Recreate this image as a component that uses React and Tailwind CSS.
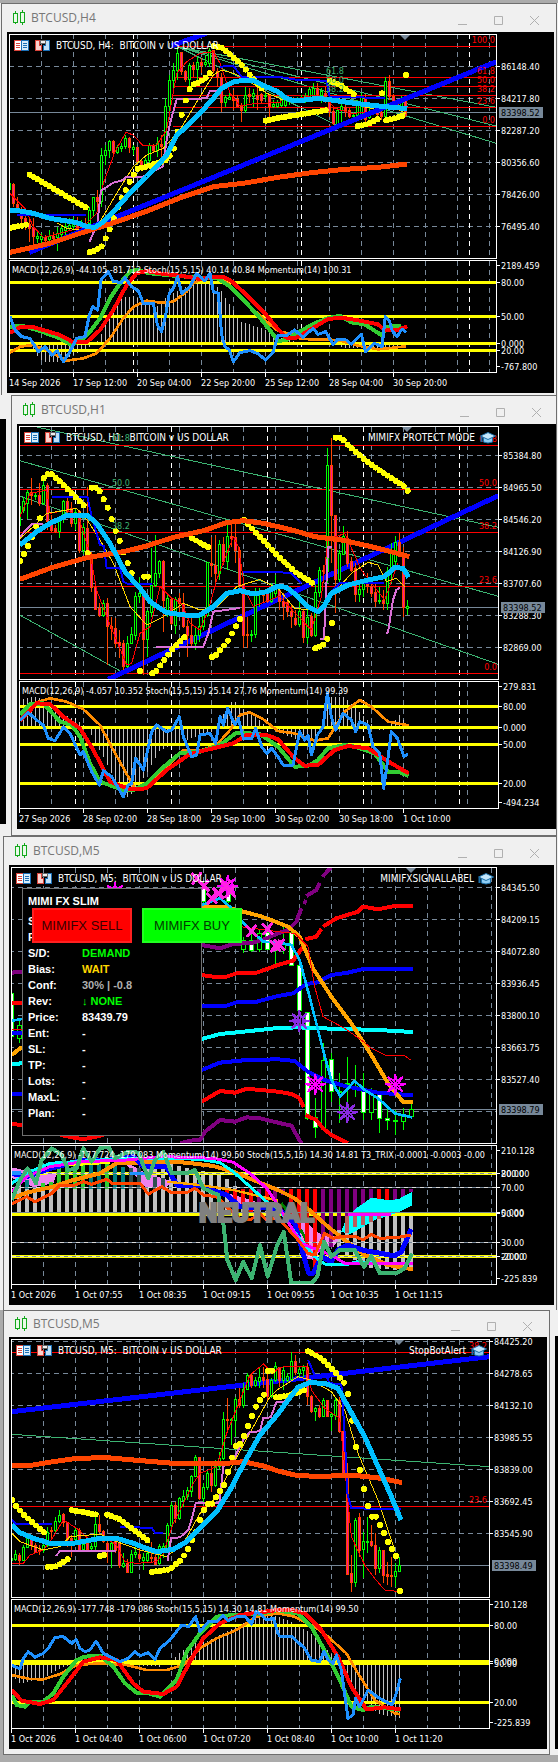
import React from "react";

const HALF = 834;
const FONT = '"DejaVu Sans Condensed", "DejaVu Sans", sans-serif';

const parse = (s) =>
  s.trim() ? s.trim().split(/\s+/).map((p) => p.split(",").map(Number)) : [];
const join = (left, right = "") => [
  ...parse(left),
  ...parse(right).map(([x, y]) => [x + HALF, y]),
];

function valueAt(points, x) {
  if (x <= points[0][0]) return points[0][1];
  for (let i = 1; i < points.length; i++) {
    const [x0, y0] = points[i - 1];
    const [x1, y1] = points[i];
    if (x <= x1) return x1 === x0 ? y1 : y0 + ((y1 - y0) * (x - x0)) / (x1 - x0);
  }
  return points[points.length - 1][1];
}

/* Plot space uses three units per pixel. */
function Plot({ y, clip, children }) {
  return (
    <g clipPath={`url(#${clip})`}>
      <g transform={`scale(${1 / 3}) translate(0 ${y})`} shapeRendering="crispEdges">
        {children}
      </g>
    </g>
  );
}

function Line({ l = "", r = "", c, w = 3 }) {
  return (
    <polyline
      points={join(l, r).map((p) => p.join(",")).join(" ")}
      fill="none"
      stroke={c}
      strokeWidth={w}
      strokeLinejoin="round"
    />
  );
}

function Dots({ l = "", r = "" }) {
  const pts = join(l, r);
  const end = pts[pts.length - 1][0];
  const out = [];
  for (let x = pts[0][0]; x <= end + 4; x += 12) out.push([x, valueAt(pts, x)]);
  return (
    <g fill="#ffff00">
      {out.map(([x, y]) => (
        <circle key={x} cx={x} cy={y} r="9" />
      ))}
    </g>
  );
}

function Bars({ l, r, zero, from, to, step = 12, w = 3 }) {
  const pts = join(l, r);
  const out = [];
  for (let x = from; x <= to; x += step) out.push([x, valueAt(pts, x)]);
  return (
    <g stroke="#c0c0c0" strokeWidth={w}>
      {out.map(([x, y]) => (
        <line key={x} x1={x} x2={x} y1={zero} y2={y} />
      ))}
    </g>
  );
}

/* Each candle: high,top,bottom,low followed by u or d. */
function Candles({ data, start }) {
  return (
    <g strokeWidth="3">
      {data.trim().split(/\s+/).map((s, i) => {
        const up = s.endsWith("u");
        const [h, t, b, lo] = s.slice(0, -1).split(",").map(Number);
        const x = start + i * 12;
        const color = up ? "#00ff00" : "#ff4500";
        return (
          <g key={i} stroke={color}>
            <line x1={x} x2={x} y1={h} y2={lo} />
            <rect x={x - 3} y={t} width="6" height={Math.max(3, b - t)} fill={up ? "#000" : "#ff1493"} />
          </g>
        );
      })}
    </g>
  );
}

function Grid({ right, rows = [], cols, top, bottom, marks = [] }) {
  return (
    <g stroke="#778899" strokeWidth="3" strokeDasharray="15 12">
      {rows.map((y) => (
        <line key={"h" + y} x1="28" x2={right} y1={y} y2={y} />
      ))}
      {Array.from({ length: 15 }, (_, i) => cols + i * 96).map((x) => (
        <line key={"v" + x} x1={x} x2={x} y1={top} y2={bottom} />
      ))}
      {marks.map((x) => (
        <line key={"m" + x} x1={x} x2={x} y1={top} y2={bottom} stroke="#fff" />
      ))}
    </g>
  );
}

function Levels({ ys, x1, x2, w = 9, c = "#ffff00" }) {
  return ys.map((y) => <line key={y} x1={x1} x2={x2} y1={y} y2={y} stroke={c} strokeWidth={w} />);
}

function Label({ x, y, children, fill = "#fff", anchor = "start", size = 9 }) {
  return (
    <text x={x} y={y} fill={fill} textAnchor={anchor} fontSize={size} style={{ fontFamily: FONT, whiteSpace: "pre" }}>
      {children}
    </text>
  );
}

function Frame({ x, w, panes }) {
  return (
    <g fill="none" stroke="#fff" shapeRendering="crispEdges">
      {panes.map(([y, h]) => (
        <rect key={y} x={x + 0.5} y={y + 0.5} width={w} height={h} />
      ))}
    </g>
  );
}

function PriceAxis({ x, labels }) {
  return (
    <g>
      {labels.map(([y, t]) => (
        <g key={y + t}>
          <line x1={x} x2={x + 4} y1={y + 0.5} y2={y + 0.5} stroke="#fff" shapeRendering="crispEdges" />
          <Label x={x + 5} y={y + 4}>{t}</Label>
        </g>
      ))}
    </g>
  );
}

function PriceTag({ x, y, children }) {
  return (
    <g>
      <rect x={x + 3} y={y - 5} width="44" height="11" fill="#778899" />
      <Label x={x + 5} y={y + 4} fill="#000">{children}</Label>
    </g>
  );
}

function TimeAxis({ x, y, labels }) {
  return labels.map((t, i) => (
    <g key={t}>
      <line x1={x + i * 64 + 0.5} x2={x + i * 64 + 0.5} y1={y} y2={y + 4} stroke="#fff" shapeRendering="crispEdges" />
      <Label x={x + i * 64} y={y + 13}>{t}</Label>
    </g>
  ));
}

function HeaderIcons({ x, y }) {
  return (
    <g transform={`translate(${x} ${y})`} shapeRendering="crispEdges">
      <rect x="0" y="0" width="8" height="11" fill="#d9453b" />
      <rect x="7" y="0" width="8" height="11" fill="#1b6fb5" />
      <rect x="1" y="1" width="6" height="9" fill="#fff" />
      <rect x="8" y="1" width="6" height="9" fill="#d8ecfa" />
      <path d="M2 3.5h4M2 5.5h4M2 7.5h4" stroke="#d9453b" />
      <path d="M9 3.5h4M9 5.5h4M9 7.5h4" stroke="#1b6fb5" />
      <path d="M21.500 .5h4v5h2v5h-6z" fill="#fbd3cf" stroke="#d9453b" />
      <path d="M31.500 .5h4v10h-6v-5h2z" fill="#bfe0f8" stroke="#1b6fb5" />
      <rect x="26" y="0" width="5" height="3" fill="#f0f0f0" stroke="#666" />
    </g>
  );
}

function Cap({ x, y }) {
  return (
    <g transform={`translate(${x} ${y})`}>
      <path d="M3.5 5v5q4.500 2 9 0V5z" fill="#8fcdf4" stroke="#1b6fa8" />
      <path d="M.5 4 8 .5 15.500 4 8 7.500z" fill="#c4e6fb" stroke="#1b6fa8" />
      <path d="M1.500 4.500V10" stroke="#1b6fa8" strokeWidth="2" />
    </g>
  );
}

function Marker({ x, y }) {
  return <path d={`M${x - 5} ${y}h10l-5 5z`} fill="#778899" />;
}

const H4_CANDLES = `548,550,569,590u 550,552,610,620d 590,612,622,640d 620,640,655,670d 640,655,670,690d 650,672,685,725d 655,683,710,750d 690,709,715,730u 700,708,718,728u 705,712,720,730d 690,708,718,728u 695,708,715,728d 680,700,712,752u 675,685,703,720u 665,680,690,705u 655,675,685,690u 650,670,680,690u 650,672,682,695d 660,675,680,690u 655,670,680,690d 620,630,670,700u 590,592,630,650u 570,592,605,625d 445,465,605,620u 435,450,465,495u 420,425,450,475u 420,425,458,462d 435,443,458,462u 430,440,445,455u 405,415,440,448u 412,415,443,460d 435,443,448,465u 440,442,485,490d 480,485,495,500d 475,482,492,500u 428,435,480,490u 432,437,452,460d 410,430,452,470u 405,432,438,490d 295,320,440,460u 225,240,320,345u 190,210,242,270u 140,160,212,240u 155,158,214,225d 210,213,237,245d 190,197,237,265u 185,195,208,230d 170,186,208,240u 175,186,195,220d 165,188,193,200u 145,150,190,200u 150,152,212,220d 205,213,232,260d 220,232,308,335d 285,293,308,320u 275,293,297,300u 270,292,300,330d 285,298,318,320d 310,318,330,365d 262,285,330,340u 265,282,290,310d 268,280,290,320u 265,285,298,330d 280,284,300,310d 275,285,288,300u 285,288,318,355d 300,312,320,325u 300,308,318,325u 290,300,315,320u 295,300,315,320u 290,295,305,315u 290,295,300,310d 290,298,303,310u 285,295,305,310u 278,290,300,310u 260,268,290,295u 250,265,285,295u 250,265,283,290d 265,275,285,310u 260,280,290,310d 285,295,335,350d 325,333,370,375d 325,330,372,380u 300,318,330,380u 305,322,330,350d 325,332,350,355d 335,347,350,365u 300,312,347,355u 280,290,350,355u 282,295,357,365d 325,335,352,358u 310,330,340,345u 318,332,342,348d 330,338,350,360d 232,244,350,352u 225,244,290,300d 282,290,315,320d 300,312,322,330d 288,298,318,325u 285,298,345,350d`;

const H1_CANDLES = `220,230,285,290u 200,215,240,248u 180,186,220,268u 143,186,196,225d 190,195,200,210u 160,195,220,228d 150,165,220,225u 160,165,275,300d 255,270,300,305d 285,295,305,310d 260,265,305,325u 210,214,265,280u 205,214,245,260d 215,235,280,290d 235,248,280,300u 240,245,360,370d 280,293,360,372u 172,295,385,390d 365,385,472,485d 468,472,538,540d 520,535,555,560d 510,520,555,560u 505,520,590,705d 560,590,595,630d 565,595,640,655d 600,638,645,685d 630,640,710,720d 618,640,710,715u 590,612,640,640u 485,500,615,630u 440,490,500,520u 480,500,628,735d 540,545,628,680u 355,465,548,560u 315,430,467,470u 390,395,430,445u 390,395,512,605d 490,505,545,560u 500,508,580,585d 500,508,585,612u 490,505,520,550d 488,520,590,595d 570,588,615,682d 560,615,640,650d 590,615,640,660u 560,590,615,635u 545,555,590,600u 395,398,555,560u 320,400,405,440d 315,405,430,460d 330,342,430,450u 322,342,395,405d 285,318,395,420u 275,318,325,350d 280,323,360,398d 350,362,470,490d 450,462,615,655d 560,614,616,655d 600,612,616,635u 475,485,612,625u 475,485,490,530u 480,485,495,520d 475,490,515,520d 460,480,515,520u 435,465,490,500u 475,480,515,540d 490,515,530,570d 510,518,545,560d 525,545,560,595d 540,565,582,588d 510,545,582,590u 540,545,622,640d 530,562,622,642u 550,560,615,620d 465,487,615,620u 412,420,487,500u 405,420,425,460d 55,106,425,460u 25,106,256,400d 255,256,448,550d 360,370,448,460u 288,320,372,375u 303,325,400,410d 380,395,420,425d 400,415,492,515d 460,478,492,515u 450,460,478,500u 430,462,470,490d 458,470,490,500d 460,488,515,530d 470,510,515,522u 480,510,520,540d 410,425,520,540u 340,370,425,460u 318,337,395,405u 308,337,380,382d 350,370,533,560d 510,530,535,555u`;

const M5_CANDLES = `620,625,632,640u 600,612,628,632u 608,615,630,645d 585,592,630,630u 550,562,592,595u 555,562,585,600d 580,585,608,610d 585,600,605,615d 570,585,600,610u 530,548,585,590u 530,540,545,565d 500,515,540,550u 480,497,515,520u 488,492,518,530d 515,518,568,590d 555,565,585,620d 535,540,568,580u 535,540,600,605d 580,582,598,605u 570,580,598,600d 580,588,595,600u 500,522,590,600u 495,522,545,550d 540,545,575,580d 570,580,600,640d 575,580,600,655u 565,575,600,610d 575,580,645,655d 610,640,650,655u 628,640,667,667d 600,612,667,668u 590,608,612,625u 585,612,625,635d 610,622,630,660u 600,610,630,640u 575,622,625,640d 610,622,642,645d 582,590,640,645u 580,590,595,625u 520,526,600,610u 455,465,527,530u 455,465,505,520d 440,445,505,510u 420,440,450,470u 410,422,440,450u 375,378,425,440u 315,322,378,380u 320,322,445,450d 400,412,445,460u 360,370,412,420u 345,370,405,425d 330,350,405,410u 305,325,350,360u 185,208,325,330u 145,208,212,240d 205,208,212,285u 140,147,210,260u 115,148,165,175d 100,118,165,175u 70,75,118,120u 70,75,105,115d 80,92,105,110u 55,82,95,115u 50,82,90,115d 70,88,140,150d 85,92,140,145u 35,50,92,95u 50,52,90,110d 50,60,92,120u 70,80,90,95u 5,35,88,90u 15,35,68,75d 50,58,70,80u 45,52,60,80u 40,52,140,165d 135,140,185,190d 170,175,185,212u 165,175,200,205d 145,152,200,202u 150,152,200,200d 190,192,198,242u 140,150,195,210u 140,150,245,250d 240,245,375,380d 340,375,672,675d 615,670,697,725d 505,510,697,710u 490,503,600,620d 545,573,598,685u 500,573,577,610u 525,573,587,590d 550,585,655,675d 590,600,655,670u 600,602,675,700d 635,672,678,705d 620,675,680,710d 640,665,680,710u 620,645,665,665u`;

function ChartH4() {
  return (
    <svg viewBox="7 32 547 361" className="block h-auto w-full bg-black" role="img" aria-label="BTCUSD H4 chart">
      <clipPath id="a1"><rect x="10" y="35" width="486" height="223" /></clipPath>
      <clipPath id="a2"><rect x="10" y="261" width="486" height="111" /></clipPath>
      <Plot y={0} clip="a1">
        <Grid right={1489} rows={[199, 295, 391, 487, 583, 679]} cols={125} top={103} bottom={774} marks={[401, 904, 1408]} />
        <Line l="28,337 1489,337" c="#778899" />
        <Line l="533,140 1489,322" c="#3cb371" />
        <Line l="533,140 1489,378" c="#3cb371" />
        <Line l="533,140 1489,430" c="#3cb371" />
        <Line l="533,140" r="180,378" c="#3cb371" />
        <Levels ys={[139, 232, 259, 286, 322, 379]} x1={520} x2={1489} w={3} c="#ff0000" />
        <Candles data={H4_CANDLES} start={29} />
        <Line l="30,580 75,625 100,680 130,712 180,700 250,680 290,640 310,550 345,455 378,397 400,405 430,438 470,435 500,390 530,220 560,185 600,160 640,155 660,190 690,280 720,318 770,310 840,308" r="10,300 60,295 110,285 150,300 170,325 220,340 300,335 330,320 385,325" c="#ff0000" />
        <Line l="170,668 200,685 240,690 300,665 350,580 400,500 440,465 490,445 540,390 600,290 640,225 665,210 700,220 750,245 800,280 840,295" r="10,300 100,295 180,295 250,318 300,330 340,320 385,340" c="#ffd700" />
        <Line l="50,645 258,645" c="#0000ff" w={6} />
        <Line l="660,200 700,198 725,230 834,230" r="30,235 60,240 145,242 155,290 320,294" c="#0000ff" w={6} />
        <Line l="268,727 292,670 303,572 340,548 370,540 378,530 430,530 488,500 500,420 510,370 530,298 620,295 630,272 655,272" c="#da70d6" w={6} />
        <Line l="88,757 836,452" r="655,185" c="#0000ff" w={15} />
        <Line l="515,137 620,100" c="#0000ff" w={15} />
        <Dots l="89,524 262,625" />
        <Dots l="30,684 85,673" />
        <Dots l="269,757 285,752 307,738 318,713 330,686 342,652 354,620 366,592 378,568 390,543 402,522 414,505 440,500 470,490 500,480 512,463 524,440 534,390 546,340 558,298 570,265 582,252 600,248 610,235 620,232 632,215" />
        <Dots l="641,138 665,143 690,163 725,195 740,212 752,228 785,265" />
        <Dots l="797,362" r="0,354 150,330" />
        <Dots r="155,242 190,257 230,285" />
        <Dots r="239,379 270,372 305,355" />
        <Dots r="325,361 350,355 380,345" />
        <Dots r="312,280" />
        <Dots r="384,225" />
        <Line l="30,757 150,730 240,700 330,672 450,630 550,590 640,560 730,550 834,532" r="100,518 200,508 300,502 388,492" c="#ff4500" w={15} />
        <Line l="30,632 60,633 100,640 150,655 200,663 230,668 262,680 285,682 310,665 340,635 400,568 440,530 470,500 500,465 530,405 560,380 600,340 640,295 665,265 700,246 735,240 765,243 790,257 834,275" r="20,292 45,302 80,300 120,295 160,300 230,310 320,320 388,326" c="#00bfff" w={15} />
      </Plot>
      <Plot y={765} clip="a2">
        <Grid right={1489} cols={125} top={17} bottom={352} marks={[401, 904, 1408]} />
        <Bars zero={265} from={29} to={1217} l="30,268 80,268 130,320 180,322 230,295 280,272 300,250 330,170 365,130 400,122 440,140 480,155 500,125 540,105 580,85 620,78 660,100 690,150 725,200 790,222 834,245" r="60,262 100,265 160,262 200,280 290,278 385,275" />
        <Levels ys={[82, 184, 265, 286]} x1={24} x2={1489} />
        <Line l="30,293 60,275 100,270 150,290 200,317 250,310 290,295 330,250 370,190 400,155 440,137 480,143 520,140 560,110 580,85 600,75 660,68 690,90 740,145 800,200 834,228" r="40,238 70,252 180,255 240,272 300,283 385,274" c="#ff8c00" w={8} />
        <Line l="30,215 70,213 120,228 180,250 215,270 250,250 270,230 300,190 330,130 360,85 390,50 410,45 450,55 520,62 600,68 650,68 690,95 740,145 790,200 834,258" r="25,255 60,232 110,205 150,190 185,182 220,202 260,208 310,240 330,215 370,213" c="#32cd32" w={12} />
        <Line l="30,233 60,217 95,215 130,225 180,240 220,262 260,262 300,225 340,165 380,90 410,55 440,48 480,55 560,65 600,72 640,65 670,66 690,75 740,120 790,170 834,222" r="25,248 50,250 70,240 100,222 150,192 190,188 240,196 300,208 320,226 340,224 360,225 388,214" c="#ff0000" w={12} />
        <Line l="30,185 45,225 65,245 90,250 115,290 135,275 155,300 172,288 190,320 210,290 230,250 255,245 268,180 278,155 293,165 303,75 325,50 340,80 365,82 375,68 395,95 415,108 430,145 460,145 472,210 485,230 497,180 508,115 520,100 533,65 545,115 570,95 590,55 615,78 630,55 640,110 655,115 665,240 675,275 688,285 700,320 720,293 750,287 775,297 797,315 820,290 834,240" r="25,242 50,225 75,247 105,220 120,238 143,230 165,268 180,252 200,252 220,267 250,238 262,290 290,265 312,275 322,185 335,200 343,228 357,245 372,222 385,232" c="#1e90ff" w={9} />
      </Plot>
      <Frame x={9} w={487} panes={[[34, 224], [260, 112]]} />
      <Marker x={405} y={35} />
      <HeaderIcons x={14} y={40} />
      <Label x={56} y={49} size={10}>BTCUSD, H4:  BITCOIN v US DOLLAR</Label>
      <Label x={344} y={74} anchor="end" fill="#3cb371">61.8</Label>
      <Label x={344} y={83} anchor="end" fill="#3cb371">50.0</Label>
      <Label x={344} y={92} anchor="end" fill="#3cb371">38.2</Label>
      {[[43, "100.0"], [74, "61.8"], [83, "50.0"], [92, "38.2"], [104, "23.6"], [123, "0.0"]].map(([y, t]) => (
        <Label key={t} x={495} y={y} anchor="end" fill="#ff0000">{t}</Label>
      ))}
      <Label x={12} y={273}>MACD(12,26,9) -44.105 -81.712 Stoch(15,5,15) 40.14 40.84 Momentum(14) 100.31</Label>
      <PriceAxis x={496} labels={[[66, "86148.40"], [98, "84217.80"], [130, "82287.20"], [162, "80356.60"], [194, "78426.00"], [226, "76495.40"], [265, "2189.459"], [282, "80.00"], [316, "50.00"], [343, "0.000"], [350, "20.00"], [366, "-767.800"]]} />
      <PriceTag x={496} y={112}>83398.52</PriceTag>
      <TimeAxis x={9} y={373} labels={["14 Sep 2026", "17 Sep 12:00", "20 Sep 04:00", "22 Sep 20:00", "25 Sep 12:00", "28 Sep 04:00", "30 Sep 20:00"]} />
    </svg>
  );
}

function ChartH1() {
  return (
    <svg viewBox="17 424 539 405" className="block h-auto w-full bg-black" role="img" aria-label="BTCUSD H1 chart">
      <clipPath id="b1"><rect x="20" y="427" width="478" height="252" /></clipPath>
      <clipPath id="b2"><rect x="20" y="682" width="478" height="126" /></clipPath>
      <Plot y={1290} clip="b1">
        <Grid right={1495} rows={[76, 172, 268, 364, 460, 556, 652]} cols={155} top={-10} bottom={748} marks={[227, 515, 803, 1090, 1378]} />
        <Line l="59,532 1495,532" c="#778899" />
        <Line l="105,-10 1495,292" c="#3cb371" />
        <Line l="59,92 1495,499" c="#3cb371" />
        <Line l="59,198 1495,703" c="#3cb371" />
        <Line l="59,555 370,728" c="#3cb371" />
        <Levels ys={[46, 178, 307, 469, 730]} x1={59} x2={1495} w={3} c="#ff0000" />
        <Line l="325,748 1495,197" c="#0000ff" w={15} />
        <Candles data={H1_CANDLES} start={59} />
        <Line l="60,260 90,190 140,180 150,250 200,240 235,260 270,370 290,480 320,560 380,705 395,700 420,610 450,590 480,470 510,500 545,520 570,580 600,600 625,540 650,450 700,320 715,350 735,480 760,530 834,500" r="5,500 100,600 130,500 150,330 200,310 250,420 320,510 345,440 360,400" c="#ff0000" />
        <Line l="60,325 100,290 140,250 230,235 265,275 300,330 340,400 390,530 440,585 490,560 550,520 600,540 650,530 710,470 780,448 834,475" r="50,535 100,540" c="#ffd700" />
        <Line r="185,470 220,430 270,397 300,405 325,455 355,445 380,470" c="#ffd700" />
        <Line l="155,200 262,200 275,260 300,345 312,348 320,415 360,415 370,455 385,462 455,462" c="#0000ff" w={6} />
        <Line l="730,426 834,426" r="40,430 70,460" c="#0000ff" w={6} />
        <Line r="150,495 185,460 318,460" c="#0000ff" w={6} />
        <Line l="60,320 95,283 130,283" c="#da70d6" w={6} />
        <Line l="468,652 610,650 625,610 640,545 690,538 720,534" c="#da70d6" w={6} />
        <Line r="125,627 138,627 150,352 162,352" c="#da70d6" w={6} />
        <Line r="325,610 330,608 345,510 355,480 365,472" c="#da70d6" w={6} />
        <Dots l="60,393 72,372 84,348 96,322 108,290 120,265" />
        <Dots l="131,145 143,133 155,133 180,155 215,190 253,228" />
        <Dots l="263,370" />
        <Dots l="275,173 287,173 300,185 312,210 324,235 336,270 348,306 360,335 372,370 384,402 396,432" />
        <Dots l="432,440 446,440" />
        <Dots l="420,723" />
        <Dots l="457,730 470,722 482,705 515,660 555,620" />
        <Dots l="576,325 626,352" />
        <Dots l="636,681 648,675 684,632 720,567" />
        <Dots l="732,270 834,378" r="50,425 105,460" />
        <Dots r="112,655 135,645 150,624" />
        <Dots r="162,579" />
        <Dots r="173,23 190,23 210,45 255,85 300,118 380,170 390,184" />
        <Line l="60,448 155,413 260,383 370,365 440,348 520,322 610,302 680,278 730,272 790,280 834,290" r="60,305 110,320 190,330 280,350 350,368 394,380" c="#ff4500" w={15} />
        <Line l="60,345 110,305 150,280 200,257 260,255 290,280 330,340 375,425 420,475 450,515 500,548 570,557 600,555 640,530 680,490 720,482 760,492 800,485 834,468" r="25,472 60,500 90,530 120,545 140,525 160,490 210,465 270,450 320,440 350,412 375,415 392,442" c="#00bfff" w={15} />
      </Plot>
      <Plot y={1290} clip="b2">
        <Grid right={1495} cols={155} top={755} bottom={1135} marks={[227, 515, 803, 1090, 1378]} />
        <Bars zero={892} from={59} to={1223} l="60,810 100,800 130,805 170,840 230,870 262,892 280,925 310,980 350,1060 375,1105 400,1090 440,1030 480,960 560,930 600,915 640,905 660,870 690,820 700,810 730,835 760,850 790,880 834,905" r="60,930 110,930 135,890 150,800 200,800 240,840 280,880 310,905 345,880 365,855 389,885" />
        <Levels ys={[829, 892, 943, 1060]} x1={55} x2={1495} />
        <Line l="60,870 100,820 150,805 200,815 250,838 300,885 340,960 390,1050 405,1075 440,1070 490,1020 550,960 600,962 650,945 690,900 720,855 750,847 790,868 834,903" r="50,910 110,932 150,925 200,845 245,810 280,830 330,875 392,886" c="#ff8c00" w={8} />
        <Line l="60,855 90,822 130,820 180,875 215,885 240,920 270,1000 300,1055 370,1080 400,1080 440,1060 480,1020 540,970 600,965 660,945 710,908 780,912 834,950" r="50,1010 90,1008 120,990 150,955 200,945 230,950 290,970 330,1025 360,1025 392,1038" c="#32cd32" w={12} />
        <Line l="60,872 110,820 150,822 190,860 240,895 280,960 330,1055 390,1078 440,1075 500,1020 570,972 700,940 740,915 800,915 834,928" r="50,985 80,1007 120,1005 170,960 210,948 270,955 340,1000 392,1030" c="#ff0000" w={12} />
        <Line l="60,870 85,848 110,870 130,885 145,925 165,932 190,892 210,910 240,975 250,965 275,1025 298,1065 310,1022 335,1040 370,1100 385,1065 395,1060 407,985 430,1020 455,905 470,885 500,905 515,900 538,860 550,920 575,980 590,975 600,915 630,910 647,940 660,860 670,885 683,835 705,885 715,865 730,925 755,925 767,895 785,950 800,970 815,955 834,980" r="15,1005 45,1005 65,905 80,930 90,915 100,975 118,915 135,890 148,790 160,860 173,900 195,850 220,870 233,905 245,875 270,885 285,950 305,970 317,1075 330,985 340,905 358,925 378,980 390,972" c="#1e90ff" w={9} />
      </Plot>
      <Frame x={19} w={479} panes={[[426, 253], [681, 127]]} />
      <Marker x={407} y={427} />
      <HeaderIcons x={24} y={432} />
      <Label x={66} y={441} size={10}>BTCUSD, H1:  BITCOIN v US DOLLAR</Label>
      <Label x={475} y={441} size={10} anchor="end">MIMIFX PROTECT MODE</Label>
      <Label x={130} y={441} anchor="end" fill="#3cb371">61.8</Label>
      <Label x={130} y={486} anchor="end" fill="#3cb371">50.0</Label>
      <Label x={130} y={529} anchor="end" fill="#3cb371">38.2</Label>
      {[[442, "61.8"], [486, "50.0"], [529, "38.2"], [583, "23.6"], [670, "0.0"]].map(([y, t]) => (
        <Label key={t} x={497} y={y} anchor="end" fill="#ff0000">{t}</Label>
      ))}
      <Cap x={480} y={432} />
      <Label x={22} y={694}>MACD(12,26,9) -4.057 10.352 Stoch(15,5,15) 25.14 27.76 Momentum(14) 99.39</Label>
      <PriceAxis x={498} labels={[[455, "85384.80"], [487, "84965.50"], [519, "84546.20"], [551, "84126.90"], [583, "83707.60"], [615, "83288.30"], [647, "82869.00"], [686, "279.831"], [706, "80.00"], [727, "0.000"], [744, "50.00"], [783, "20.00"], [802, "-494.234"]]} />
      <PriceTag x={498} y={607}>83398.52</PriceTag>
      <TimeAxis x={19} y={809} labels={["27 Sep 2026", "28 Sep 02:00", "28 Sep 18:00", "29 Sep 10:00", "30 Sep 02:00", "30 Sep 18:00", "1 Oct 10:00"]} />
    </svg>
  );
}

const WIDE = [
  [35, 480, 490, 620, 625, 0], [58, 570, 585, 625, 640, 1], [611, 155, 175, 215, 220, 0], [684, 160, 180, 215, 220, 0],
  [730, 320, 330, 358, 370, 1], [755, 305, 330, 360, 365, 0], [779, 300, 310, 358, 365, 1], [803, 300, 308, 358, 360, 0],
  [827, 330, 345, 360, 410, 1], [850, 290, 340, 355, 372, 1], [874, 300, 308, 405, 408, 0], [898, 400, 405, 540, 545, 0],
  [922, 545, 548, 865, 870, 0], [946, 805, 862, 892, 925, 0], [970, 640, 690, 892, 895, 1], [994, 670, 688, 785, 815, 0],
  [1018, 730, 785, 788, 880, 1], [1042, 680, 760, 763, 850, 1], [1066, 705, 770, 773, 800, 1], [1090, 730, 775, 848, 870, 0],
  [1114, 775, 790, 848, 870, 1], [1138, 790, 792, 865, 910, 0], [1162, 835, 865, 870, 900, 0], [1186, 840, 870, 874, 915, 1],
  [1210, 835, 860, 875, 900, 1], [1234, 820, 838, 860, 865, 1],
];

function Burst({ x, y, c }) {
  const pts = Array.from({ length: 16 }, (_, i) => {
    const r = i % 2 ? 10 : 32;
    const a = (i * Math.PI) / 8;
    return `${x + r * Math.sin(a)},${y - r * Math.cos(a)}`;
  }).join(" ");
  return (
    <g>
      <polygon points={pts} fill="#000" fillOpacity="0.4" stroke={c} strokeWidth="5" />
      <circle cx={x} cy={y} r="7" fill={c} />
    </g>
  );
}

const COLOR_BARS = [
  [82, 150, "#008080"], [130, 160, "#32cd32"], [154, 155, "#32cd32"], [178, 115, "#32cd32"], [202, 95, "#32cd32"], [226, 92, "#32cd32"],
  [250, 85, "#32cd32"], [274, 100, "#008080"], [298, 95, "#008080"], [322, 100, "#32cd32"], [346, 105, "#008080"], [370, 110, "#008080"],
  [394, 115, "#2f4f4f"], [418, 115, "#2f4f4f"], [466, 140, "#2f4f4f"], [490, 145, "#2f4f4f"], [682, 192, "#ff0000"], [705, 235, "#ff0000"],
  [729, 225, "#ff0000"], [753, 245, "#ff0000"], [777, 240, "#800080"], [801, 220, "#ff0000"], [825, 210, "#800080"], [849, 195, "#800080"],
  [874, 270, "#ff0000"], [898, 300, "#ff0000"], [922, 370, "#ff0000"], [946, 425, "#ff0000"], [970, 390, "#800080"], [994, 350, "#800080"],
  [1018, 300, "#800080"], [1042, 310, "#800080"], [1066, 290, "#800080"], [1090, 280, "#800080"], [1114, 270, "#800080"], [1138, 260, "#ff0000"],
  [1162, 255, "#ff0000"], [1186, 225, "#800080"], [1210, 200, "#800080"], [1234, 185, "#800080"],
];

function ChartSignal() {
  return (
    <svg viewBox="9 865 545 440" className="block h-auto w-full bg-black" role="img" aria-label="BTCUSD M5 signal chart">
      <clipPath id="c1"><rect x="12" y="868" width="484" height="275" /></clipPath>
      <clipPath id="c2"><rect x="12" y="1146" width="484" height="138" /></clipPath>
      <Plot y={2490} clip="c1">
        <Grid right={1489} rows={[172, 268, 364, 460, 556, 652, 748, 844]} cols={131} top={113} bottom={940} />
        <Line l="35,838 1489,838" c="#778899" />
        <g stroke="#00ff00" strokeWidth="3">
          {WIDE.map(([x, h, t, b, lo, up]) => (
            <g key={x}>
              <line x1={x} x2={x} y1={h} y2={lo} />
              <rect x={x - 6} y={t} width="12" height={b - t} fill={up ? "#000" : "#fff"} />
            </g>
          ))}
        </g>
        <Line l="35,428 67,425" c="#800080" w={12} />
        <Line l="605,345 660,355 700,342 760,338 800,325 834,310" r="30,300 55,275 70,235" c="#800080" w={12} />
        <Line r="78,222 84,210" c="#800080" w={12} />
        <Line r="85,198 115,180 125,158" c="#800080" w={12} />
        <Line r="134,140 158,113" c="#800080" w={12} />
        <Line l="35,518 67,518" c="#ff0000" w={12} />
        <Line l="605,435 640,440 680,440 710,430 770,428 834,405" r="45,392 75,350" c="#ff0000" w={12} />
        <Line r="82,328 115,320 130,297" c="#ff0000" w={12} />
        <Line r="135,290 175,265 240,245 255,230 300,238 350,228 405,228" c="#ff0000" w={12} />
        <Line l="35,608 67,608" c="#0000ff" w={12} />
        <Line l="605,528 680,527 710,517 770,515 834,498" r="45,490 85,462 115,458 160,435 210,428 255,417 405,417" c="#0000ff" w={12} />
        <Line l="35,702 67,700" c="#00ffff" w={12} />
        <Line l="605,627 660,612 740,604 834,594" r="60,592 160,596 300,600 405,606" c="#00ffff" w={12} />
        <Line l="35,791 67,791" c="#0000ff" w={12} />
        <Line l="605,720 660,698 740,690 834,688" r="50,693 90,725 140,750 200,768 300,788 405,796" c="#0000ff" w={12} />
        <Line l="35,882 67,885" c="#ff0000" w={12} />
        <Line l="605,815 660,783 705,788 740,776 834,785" r="40,792 65,805 77,832" c="#ff0000" w={12} />
        <Line r="82,855 115,870 135,895 160,915 210,940" c="#ff0000" w={12} />
        <Line l="540,940 570,932 600,930 615,905 660,870 705,875 740,862 780,865 834,878" r="40,887 70,940" c="#800080" w={12} />
        <Line l="180,915 250,928 310,915" c="#ff0000" w={12} />
        <Line l="35,675 67,650" c="#ffa500" w={12} />
        <Line l="605,230 670,230 730,245 780,258 834,278" r="30,290 65,320 105,415 160,500 220,580 280,675 330,760 375,815 405,817" c="#ffa500" w={12} />
        <Line l="35,598 67,600" c="#ff0000" />
        <Line l="720,290 834,305" r="50,310 90,350 110,470 135,560 200,595 250,630 280,655 325,677 380,677 398,690" c="#ff0000" />
        <Line l="35,572 67,567" c="#00bfff" w={8} />
        <Line l="605,225 660,205 690,230 740,290 790,335 834,338" r="40,345 65,390 100,520 135,660 160,750 187,800 230,753 260,780 300,805 350,850 402,862" c="#00bfff" w={8} />
        <Burst x={345} y={188} c="#ff00ff" />
        <Burst x={683} y={168} c="#ff00ff" />
        <Burst x={946} y={763} c="#ff00ff" />
        <Burst x={1186} y={763} c="#ff00ff" />
        <Burst x={898} y={573} c="#8a2be2" />
        <Burst x={1042} y={847} c="#8a2be2" />
        <g stroke="#ff22e0" strokeWidth="9">
          {[[590, 145], [612, 168], [635, 205], [655, 190], [678, 168], [690, 185], [755, 303], [803, 297], [826, 348], [839, 345]].map(([x, y]) => (
            <path key={x} d={`M${x - 16} ${y - 16}l32 32M${x + 14} ${y - 18}l-28 36`} />
          ))}
        </g>
      </Plot>
      <Plot y={3390} clip="c2">
        <Grid right={1489} cols={131} top={46} bottom={463} />
        <Bars zero={247} from={58} to={1240} step={24} w={12} l="40,130 200,150 300,170 380,150 450,110 500,95 560,115 660,130 700,160 760,240" r="60,250 120,310 180,360 280,415 405,422" />
        <Levels ys={[130, 253, 379]} x1={30} x2={1489} />
        <polygon fill="#ee82ee" points="35,112 70,120 90,140 170,130 160,160 100,172 60,150 35,145" />
        <polygon fill="#ee82ee" points="370,92 440,130 520,155 500,170 440,175 400,130" />
        <polygon fill="#ee82ee" points="665,185 720,200 800,225 780,245 720,235" />
        <polygon fill="#ee82ee" points="890,262 934,290 964,315 1020,320 1000,352 965,350 945,390 915,385 905,330" />
        <Line r="10,220 50,270 80,320 100,375" c="#008000" w={9} />
        <g strokeWidth="12">
          {COLOR_BARS.map(([x, y, c]) => (
            <line key={x} x1={x} x2={x} y1={178} y2={y} stroke={c} />
          ))}
        </g>
        <polygon fill="#00ffff" points="1024,305 1039,265 1069,235 1114,203 1164,210 1194,208 1236,186 1236,227 1194,248 1124,270 1064,305 1049,312" />
        <g stroke="#bc5a5a" strokeWidth="12">
          <path d="M1042 258V308M1066 258V290M1090 258V284M1114 258V275M1138 258V266" />
        </g>
        <Levels ys={[130, 173, 248, 338, 380]} x1={35} x2={1489} w={3} c="#778899" />
        <g stroke="#dcdcdc" strokeDasharray="12 12">
          <path d="M35 130H1489M35 173H1489M35 338H1489M35 380H1489" strokeWidth="3" />
        </g>
        <Line l="35,205 80,188 160,170 220,150 300,130 350,100 500,95 560,98 640,108 700,125 760,150 834,180" r="50,205 100,245 150,290 200,330 260,375 330,405 405,418" c="#ff8c00" w={12} />
        <Line l="35,130 80,140 150,115 250,90 330,90 400,80 430,110 500,110 530,165 600,165 630,178 680,195 720,230 834,235" r="50,280 92,430 105,430 130,380 160,395 180,360 210,345 260,362 310,370 350,378 370,365 400,297" c="#0000ff" w={15} />
        <Line l="35,130 62,130" c="#1e90ff" w={12} />
        <Line l="390,130 455,130" c="#1e90ff" w={9} />
        <Line l="200,105 330,97" c="#ffff00" w={9} />
        <Line l="500,155 600,165 700,180 834,212" c="#ffa500" w={7} />
        <Line l="35,160 90,125 150,100 300,90 400,85 520,85 600,88 660,98 700,125 750,170 800,215 834,235" r="60,320 110,380 140,402 200,405 240,395 300,400 405,400" c="#00ffff" w={9} />
        <Line l="35,185 80,140 150,110 250,95 380,90 480,80 560,82 640,85 700,97 750,130 800,175 834,225" r="20,260 70,340 120,360 160,375 200,400 300,400 405,400" c="#ff00ff" w={9} />
        <Line r="210,253 340,253" c="#ff00ff" w={9} />
        <Line l="35,222 80,200 105,215 155,190 180,165 225,165 250,155 275,163 320,148 340,162 420,160 445,192 485,170 515,188 560,188 585,175 610,195 650,200 690,240 720,265 750,270 780,250 800,270 834,262" r="60,330 90,370 110,375 140,310 165,325 200,318 230,318 255,330 280,313 305,325 360,322 400,315" c="#ff4500" w={9} />
        <Line l="35,210 60,150 83,115 108,160 125,90 155,55 185,75 205,120 230,115 250,55 275,95 300,55 325,50 345,85 385,65 415,68 445,145 465,90 490,65 515,130 560,130 585,120 610,175 655,195 670,280 682,390 707,450 730,395 755,445 780,345 803,440 830,350" r="0,340 17,305 40,460 100,460 118,440 138,335 160,380 185,360 230,360 258,410 280,378 305,430 355,430 380,415 402,370" c="#3cb371" w={12} />
      </Plot>
      <text x="199" y="1222" fontSize="26" fontWeight="900" fill="#808080" stroke="#808080" strokeWidth="2" style={{ fontFamily: 'Roboto, "Liberation Sans", sans-serif' }}>
        NEUTRAL
      </text>
      <Frame x={11} w={485} panes={[[867, 276], [1145, 139]]} />
      <Marker x={411} y={868} />
      <HeaderIcons x={16} y={873} />
      <Label x={58} y={882} size={10}>BTCUSD, M5:  BITCOIN v US DOLLAR</Label>
      <Label x={474} y={882} size={10} anchor="end">MIMIFXSIGNALLABEL</Label>
      <Cap x={478} y={873} />
      <g clipPath="url(#c2)">
        <Label x={14} y={1158}>MACD(12,26,9) -177.724 -179.083 Momentum(14) 99.50 Stoch(15,5,15) 14.30 14.81 T3_TRIX -0.0001 -0.0003 -0.00</Label>
      </g>
      <PriceAxis x={496} labels={[[887, "84345.50"], [919, "84209.15"], [951, "84072.80"], [983, "83936.45"], [1015, "83800.10"], [1047, "83663.75"], [1079, "83527.40"], [1150, "210.128"], [1173, "80.00"], [1173, "200.00"], [1187, "70.00"], [1212, "0.000"], [1213, "50.00"], [1242, "30.00"], [1256, "20.00"], [1256, "-200.0"], [1278, "-225.839"]]} />
      <PriceTag x={496} y={1109}>83398.79</PriceTag>
      <TimeAxis x={11} y={1285} labels={["1 Oct 2026", "1 Oct 07:55", "1 Oct 08:35", "1 Oct 09:15", "1 Oct 09:55", "1 Oct 10:35", "1 Oct 11:15"]} />
    </svg>
  );
}

function ChartM5() {
  return (
    <svg viewBox="9 1337 538 412" className="block h-auto w-full bg-black" role="img" aria-label="BTCUSD M5 chart">
      <clipPath id="d1"><rect x="12" y="1340" width="477" height="257" /></clipPath>
      <clipPath id="d2"><rect x="12" y="1600" width="477" height="128" /></clipPath>
      <Plot y={4050} clip="d1">
        <Grid right={1469} rows={[-26, 70, 166, 262, 358, 454, 550]} cols={131} top={-31} bottom={742} />
        <Line l="35,646 1469,646" c="#778899" />
        <Levels ys={[7, 469]} x1={35} x2={1469} w={3} c="#ff0000" />
        <Line l="35,253 1469,350" c="#3cb371" />
        <Line l="35,185 1469,20" c="#0000ff" w={15} />
        <Candles data={M5_CANDLES} start={35} />
        <Line l="35,640 70,640 90,615 130,600 160,560 190,510 230,535 270,570 310,560 350,585 375,635 410,640 470,635 490,610 520,520 550,460 580,400 600,370 650,350 680,250 720,150 750,75 790,42 820,70 834,55" r="20,50 85,50 100,120 140,175 185,205 200,350 220,560 260,645 290,685 320,720 365,725" c="#ff0000" />
        <Line l="35,550 60,575 130,600 180,590 210,560 300,552 350,575 420,600 500,620 550,580 600,490 650,440 700,340 760,230 810,140 834,118" r="60,80 100,90 160,125 200,180 240,310 300,450 350,600" c="#ffd700" />
        <Line l="168,618 180,603 347,603" c="#da70d6" w={6} />
        <Line l="503,632 513,565 540,562 565,540 577,500 587,460 658,458 670,350 700,330 730,270 750,246 780,244 790,204 812,202 830,155 834,155" r="20,155 40,130 80,110" c="#da70d6" w={6} />
        <Line l="35,510 50,523 155,523" c="#0000ff" w={6} />
        <Line l="360,530 455,534 465,548 490,548" c="#0000ff" w={6} />
        <Line r="90,30 110,75 145,78 155,100 190,102 200,250 208,430 220,475 370,477" c="#0000ff" w={6} />
        <Dots l="36,450 48,468 72,495 134,549" />
        <Dots l="143,651 170,649 208,624" />
        <Dots l="215,480 290,494" />
        <Dots l="300,618 314,615" />
        <Dots l="322,494 360,508 445,573" />
        <Dots l="456,666 510,658 545,628 564,597 588,545 600,510 612,480 624,462 640,461 650,437 672,405 684,366 696,323 708,288 720,282 732,258 744,228 756,198 768,170 780,150 792,134" />
        <Dots l="804,63 820,62" />
        <Dots l="828,142 834,142" r="30,137 80,120" />
        <Dots r="90,4 130,25 175,70 198,98 210,132 222,212 234,291 246,360 258,417 270,468 282,500 294,500 306,525 318,549 330,576 354,618" />
        <Dots r="366,723" />
        <Line l="35,347 100,345 160,335 230,325 320,323 400,330 520,340 680,340 730,335 790,348 834,363" r="50,375 120,380 220,375 310,385 372,398" c="#ff4500" w={15} />
        <Line l="35,525 60,548 100,565 150,580 220,580 300,565 350,565 400,580 430,592 470,605 520,598 560,575 600,535 650,485 690,420 740,325 780,255 834,192" r="30,150 60,112 95,98 140,100 180,115 210,170 260,260 300,350 340,440 369,510" c="#00bfff" w={15} />
      </Plot>
      <Plot y={4050} clip="d2">
        <Grid right={1469} cols={131} top={748} bottom={1135} />
        <Bars zero={937} from={47} to={1199} l="35,975 60,1000 130,985 180,955 230,940 290,937 400,945 480,950 510,935 550,900 590,870 620,875 680,845 740,815 800,795 834,800" r="40,815 100,850 160,910 190,960 230,1020 300,1090 365,1105" />
        <Levels ys={[826, 1057]} x1={30} x2={1469} />
        <Levels ys={[937]} x1={30} x2={1469} w={15} />
        <Line l="35,975 90,987 130,988 180,972 230,945 300,940 380,945 440,960 500,960 550,945 600,895 650,865 710,840 770,800 834,790" r="50,800 110,830 150,860 205,910 240,970 290,1050 350,1090 367,1093" c="#ff8c00" w={8} />
        <Line l="35,1035 50,1065 75,1070 90,1055 130,1055 160,1030 190,980 230,930 255,920 300,917 340,950 375,1000 410,1028 440,1028 480,1040 530,990 560,905 600,850 650,800 700,795 780,792 834,780" r="20,785 60,790 100,830 150,920 190,1000 220,1070 255,1080 280,1070 367,1080" c="#32cd32" w={12} />
        <Line l="35,1020 65,1052 120,1062 160,1050 200,1000 250,935 300,922 350,930 400,1000 430,1025 490,1032 530,1010 570,935 610,865 660,820 720,795 834,780" r="40,780 80,790 130,840 180,920 220,1010 265,1078 320,1072 369,1078" c="#ff0000" w={12} />
        <Line l="35,945 60,957 70,925 85,905 105,922 130,910 145,895 165,862 190,860 215,880 228,868 240,895 255,905 270,900 288,873 310,910 360,935 385,925 405,905 420,917 445,908 465,928 480,895 510,870 545,825 565,830 587,800 600,845 625,815 650,815 670,797 685,812 710,800 735,800 755,822 768,785 785,795 800,810 820,805 834,850" r="5,858 40,858 80,895 100,930 125,935 138,903 150,930 165,940 175,915 190,960 210,1105 225,1095 233,1045 245,1070 270,1020 300,1042 342,1065 355,1030 367,985" c="#1e90ff" w={9} />
      </Plot>
      <Frame x={11} w={478} panes={[[1339, 258], [1599, 129]]} />
      <Marker x={399} y={1340} />
      <HeaderIcons x={16} y={1345} />
      <Label x={58} y={1354} size={10}>BTCUSD, M5:  BITCOIN v US DOLLAR</Label>
      <Label x={466} y={1354} size={10} anchor="end">StopBotAlert</Label>
      <Label x={487} y={1349} anchor="end" fill="#ff0000">38.2</Label>
      <Label x={487} y={1503} anchor="end" fill="#ff0000">23.6</Label>
      <Cap x={471} y={1345} />
      <Label x={14} y={1612}>MACD(12,26,9) -177.748 -179.086 Stoch(15,5,15) 14.30 14.81 Momentum(14) 99.50</Label>
      <PriceAxis x={489} labels={[[1341, "84425.20"], [1373, "84278.65"], [1405, "84132.10"], [1437, "83985.55"], [1469, "83839.00"], [1501, "83692.45"], [1533, "83545.90"], [1604, "210.128"], [1625, "80.00"], [1661, "0.000"], [1663, "50.00"], [1702, "20.00"], [1722, "-225.839"]]} />
      <PriceTag x={489} y={1565}>83398.49</PriceTag>
      <TimeAxis x={11} y={1729} labels={["1 Oct 2026", "1 Oct 04:40", "1 Oct 06:00", "1 Oct 07:20", "1 Oct 08:40", "1 Oct 10:00", "1 Oct 11:20"]} />
    </svg>
  );
}

function CandleIcon() {
  return (
    <svg width="12" height="16" viewBox="0 0 12 16" fill="#eafbe9" stroke="#13a81c" shapeRendering="crispEdges" aria-hidden="true">
      <path d="M2.500 1v13M9.500 0v15" />
      <rect x="0.5" y="3.500" width="4" height="9" />
      <rect x="7.500" y="2.500" width="4" height="10" />
    </svg>
  );
}

const CONTROLS = [
  ["Minimize", "M1 9.500h9"],
  ["Maximize", "M1.500 1.500h8v8h-8z"],
  ["Close", "M1 1l9 9M10 1l-9 9"],
];

function Window({ title, bar = "h-7 pr-1", body = "pr-0.5", bottom, children }) {
  return (
    <section className={"min-w-0 flex-1 border-x border-t border-[#6e6e6e] bg-[#f0f0f0] " + bottom}>
      <header className={"flex items-center pl-[11px] " + bar}>
        <CandleIcon />
        <h2 className="ml-1.5 flex-1 font-['Open_Sans'] text-[12px] leading-4 text-[#777777]">{title}</h2>
        {CONTROLS.map(([name, d]) => (
          <button key={name} type="button" aria-label={name} className="flex h-6 w-9 items-center justify-center pt-1">
            <svg width="11" height="11" viewBox="0 0 11 11" fill="none" stroke="#b0b0b0" aria-hidden="true">
              <path d={d} />
            </svg>
          </button>
        ))}
      </header>
      <div className={"relative pl-[5px] " + body}>{children}</div>
    </section>
  );
}

const ROWS = [
  ["S/R:", "", ""],
  ["FVG:", "", ""],
  ["S/D:", "DEMAND", "text-[#00ff00]"],
  ["Bias:", "WAIT", "text-[#ffd700]"],
  ["Conf:", "30% | -0.8", "text-[#b0b0b0]"],
  ["Rev:", "↓ NONE", "text-[#00ff00]"],
  ["Price:", "83439.79", "text-white"],
  ["Ent:", "-", "text-white"],
  ["SL:", "-", "text-white"],
  ["TP:", "-", "text-white"],
  ["Lots:", "-", "text-white"],
  ["MaxL:", "-", "text-white"],
  ["Plan:", "-", "text-white"],
];

function SignalPanel() {
  return (
    <>
      <div className="absolute left-[18px] top-[23px] h-[248px] w-[180px] border border-[#707070] bg-black pl-[5px] pt-1 font-['Liberation_Sans'] text-[11px] font-bold text-white">
        <h3 className="h-5 leading-4">MIMI FX SLIM</h3>
        <dl className="grid grid-cols-[54px_1fr] leading-4">
          {ROWS.map(([k, v, c]) => (
            <React.Fragment key={k}>
              <dt className="h-4">{k}</dt>
              <dd className={"h-4 " + c}>{v}</dd>
            </React.Fragment>
          ))}
        </dl>
      </div>
      <div className="absolute left-[28px] top-[43px] flex gap-2.5 font-['Liberation_Sans'] text-[13px]">
        <button type="button" className="h-[35px] w-[100px] whitespace-nowrap border-2 border-[#ff2020] bg-[#ff0000] text-[#3a0000]">MIMIFX SELL</button>
        <button type="button" className="h-[35px] w-[100px] whitespace-nowrap border-2 border-[#20ff20] bg-[#00ff00] text-[#003a00]">MIMIFX BUY</button>
      </div>
    </>
  );
}

export default function App() {
  return (
    <main className="w-full bg-[#ababab] pb-[7px] pt-[3px]">
      <div className="flex">
        <div className="w-px bg-[#f0f0f0]" />
        <Window title="BTCUSD,H4" bottom="pb-0.5">
          <ChartH4 />
        </Window>
        <div className="w-px bg-[#f0f0f0]" />
      </div>
      <div className="flex">
        <div className="w-[11px] bg-[#f0f0f0] pb-3 pt-6">
          <div className="h-full w-1.5 bg-black" />
        </div>
        <Window title="BTCUSD,H1" bar="h-7 pr-0.5" body="pr-0" bottom="border-b pb-1.5">
          <ChartH1 />
        </Window>
        <div className="w-px bg-[#f0f0f0]" />
      </div>
      <div className="flex">
        <div className="w-[3px] bg-[#f0f0f0]" />
        <Window title="BTCUSD,M5" bottom="pb-[5px]">
          <ChartSignal />
          <SignalPanel />
        </Window>
        <div className="w-px bg-[#f0f0f0]" />
      </div>
      <div className="flex">
        <div className="w-[3px]" />
        <Window title="BTCUSD,M5" bar="h-[26px] pr-1" bottom="border-b pb-[5px]">
          <ChartM5 />
        </Window>
        <div className="flex w-2 flex-col bg-[#f0f0f0] pb-1.5 pl-[5px] pt-[26px]">
          <div className="flex-1 bg-black" />
        </div>
      </div>
    </main>
  );
}
